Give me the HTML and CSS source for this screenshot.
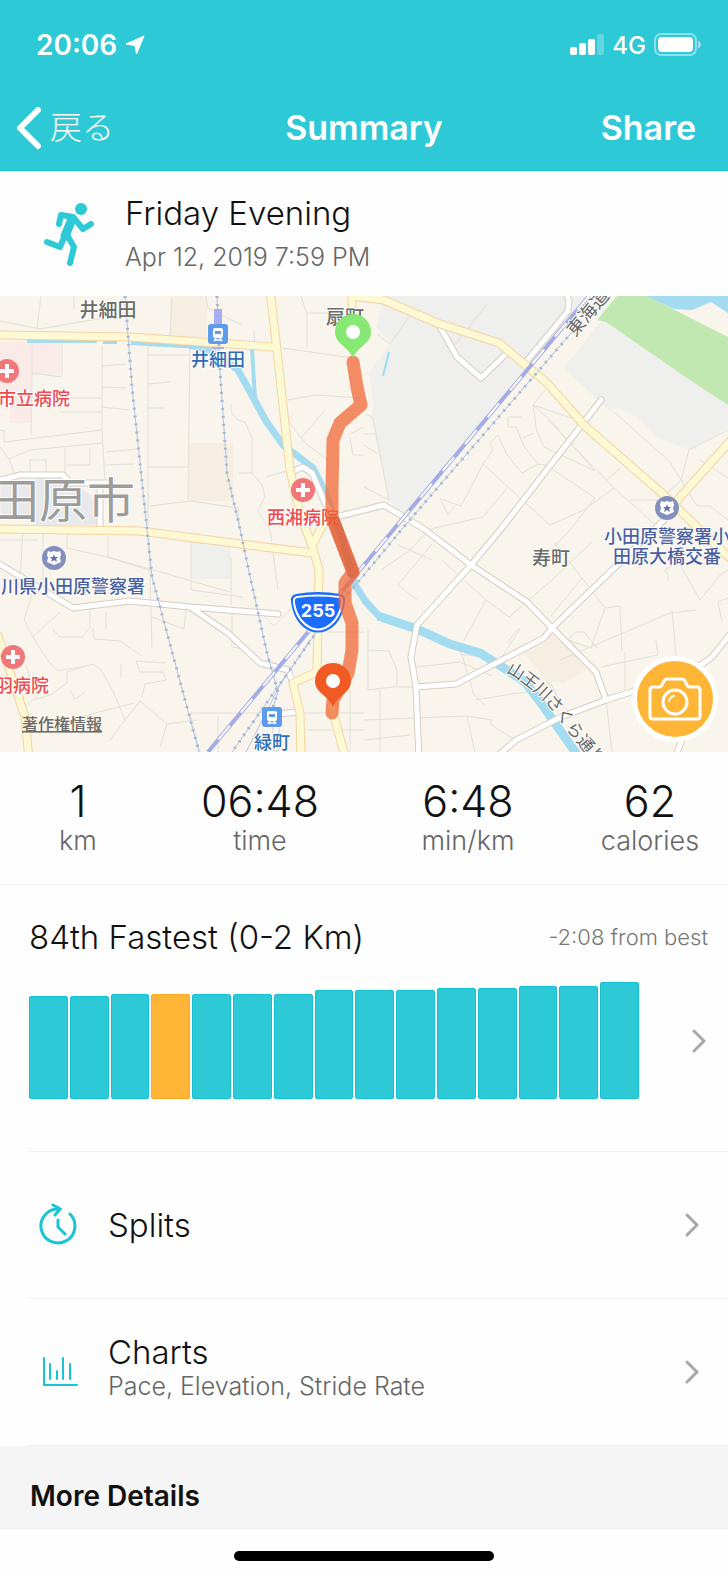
FILE: index.html
```
<!DOCTYPE html>
<html lang="ja">

<head>
    <meta charset="UTF-8">
    <meta name="viewport" content="width=device-width, initial-scale=1">
    <title>Summary</title>
    <link rel="stylesheet" href="styles.css">
</head>

<body>
    <header class="header">
        <div class="status-bar">
            <div class="status-time">
                <span>20:06</span>
                <svg width="20" height="20" viewBox="0 0 20 20"><path d="M19 1L1 9L10 10.500L11.500 19Z" fill="#fff" stroke="#fff" stroke-width="1" stroke-linejoin="round"/></svg>
            </div>
            <div class="status-icons">
                <svg width="34" height="22" viewBox="0 0 34 22" fill="#fff">
                    <rect x="0" y="13" width="7" height="8" rx="2"/>
                    <rect x="9" y="9" width="7" height="12" rx="2"/>
                    <rect x="18" y="5" width="7" height="16" rx="2"/>
                    <rect x="27" y="0" width="7" height="21" rx="2" opacity=".25"/>
                </svg>
                <span>4G</span>
                <svg width="48" height="24" viewBox="0 0 48 24">
                    <rect x="1" y="1" width="41" height="21" rx="6" fill="none" stroke="#fff" stroke-width="2" opacity=".45"/>
                    <rect x="4" y="4" width="35" height="15" rx="4" fill="#fff"/>
                    <path d="M44 7.500C48 9 48 14 44 15.500Z" fill="#fff" opacity=".5"/>
                </svg>
            </div>
        </div>
        <nav class="nav">
            <a href="#" class="nav-back">
                <svg width="26" height="42" viewBox="0 0 26 42"><path d="M22 3L4 21L22 39" fill="none" stroke="#fff" stroke-width="6" stroke-linecap="round" stroke-linejoin="round"/></svg>
                <span>戻る</span>
            </a>
            <h1 class="nav-title">Summary</h1>
            <button type="button" class="nav-share">Share</button>
        </nav>
    </header>

    <main>
        <section class="activity">
            <svg class="runner" width="52" height="66" viewBox="0 0 52 66" fill="none" stroke="#2dc9d7" stroke-width="6" stroke-linecap="round" stroke-linejoin="round">
                <circle cx="38" cy="7" r="6" fill="#2dc9d7" stroke="none"/>
                <path d="M16 22L18 13L30 15L40 27L48 22"/>
                <path d="M4 40L17 45L27 22"/>
                <path d="M24 33L31 45L27 61"/>
                <path d="M29 17L22 34" stroke-width="9"/>
            </svg>
            <div>
                <h2 class="activity-title">Friday Evening</h2>
                <p class="activity-date">Apr 12, 2019 7:59 PM</p>
            </div>
        </section>

        <section class="map">
            <svg class="map-canvas" viewBox="0 296 728 456">
                <defs>
                    <g id="hospital">
                        <circle r="12" fill="#f1787a"/>
                        <path d="M-7 0H7M0 -7V7" stroke="#fff" stroke-width="4"/>
                    </g>
                    <g id="police">
                        <circle r="12" fill="#8390bd"/>
                        <path d="M-6 -7L-3 -6L0 -7L3 -6L6 -7L7 -3L6 0L7 4L0 7L-7 4L-6 0L-7 -3Z" fill="#fff"/>
                        <path d="M0 -4L1 -1H4L2 1L3 4L0 2L-3 4L-2 1L-4 -1H-1Z" fill="#5f70aa"/>
                    </g>
                    <g id="train">
                        <rect x="-10" y="-10" width="20" height="20" rx="3" fill="#5d9cec"/>
                        <rect x="-5" y="-6" width="10" height="10" rx="2" fill="#fff"/>
                        <path d="M-3 -3H3V0H-3Z" fill="#5d9cec"/>
                        <path d="M-4 7L-2 4M4 7L2 4M-3 6H3" stroke="#fff" stroke-width="1.500"/>
                    </g>
                    <path id="pin" d="M0 26C-5 14 -18 12 -18 0A18 18 0 0 1 18 0C18 12 5 14 0 26Z"/>
                    <path id="river-street" d="M510 665Q547 686 570 720T627 778"/>

                    <g id="main-roads">
                        <path d="M0 335L130 337L273 347"/>
                        <path d="M270 290L277 350L290 470L300 515L312 545L319 570L317 672L293 683L300 713L301 760"/>
                        <path d="M0 529L140 531L233 543L312 553M323 525L312 545"/>
                        <path d="M352 290V330M352 296L384 300L437 323L499 343L547 383L586 427L664 495L697 527L732 560"/>
                        <path d="M732 439L664 515M331 705L346 760M-2 636L25 717L29 760"/>
                    </g>
                    <g id="side-roads">
                        <path d="M439 325L457 357L481 378L507 353"/>
                        <path d="M564 290L569 300L568 311L526 362"/>
                        <path d="M601 400L501 529L471 565L417 625L411 657L416 687L419 760"/>
                        <path d="M332 518L384 505L424 529L471 565L527 602L552 628L596 672L606 700"/>
                        <path d="M664 520L552 628L544 638L456 684L416 687"/>
                        <path d="M495 758L516 740L561 717L606 700L631 692L701 665L712 657L732 632"/>
                        <path d="M674 760L684 735"/>
                        <path d="M-4 562L73 608L130 601L190 607L278 614M190 607L228 633L260 663L288 670L293 683"/>
                        <path d="M-4 481L20 475H63L70 483H107M100 483V526"/>
                        <path d="M294 471L303 467L312 473L325 503L334 515"/>
                        <path d="M299 712L276 714V748"/>
                    </g>
                </defs>

                <rect y="296" width="728" height="456" fill="#f9f4ec"/>

                <!-- land use -->
                <path d="M384 296L376 327L390 343L369 373L374 405L371 417L389 500L404 517L520 374L577 310L585 296Z" fill="#efefed"/>
                <path d="M602 320L564 368L611 412L617 407L637 417L657 437L689 450L728 428V400Z" fill="#efefed"/>
                <path d="M617 296L597 320L606 322L687 378L728 405V337L647 296Z" fill="#c0e8b0"/>
                <path d="M646 296L674 309L692 310L711 302L728 313V296Z" fill="#a3dcf0"/>
                <path d="M0 342H61V375H31V423H10V395H0Z" fill="#fbebe8"/>
                <path d="M170 296H207V337H170ZM189 443H233V501H189ZM552 635L524 653L546 680L564 683L591 667Z" fill="#f5eee1"/>
                <path d="M191 541H231V579H191Z" fill="#efefed"/>
                <path d="M35 478H66L92 496L97 525H35ZM0 483H32V518H0Z" fill="#e9e9ec"/>

                <!-- alleys -->
                <g class="alley">
                    <path d="M0 321L40 329L137 312M41 296L37 328M74 296V309M170 337L172 298M206 296L208 308L241 325L242 322M254 330L255 349M301 296L307 314V348M307 313H328M283 348L353 358M288 400L315 395L361 398"/>
                    <path d="M32 342V373L62 377V343M32 373L31 435M31 398H102M60 412H102M102 345V430M102 430L4 442V431L0 430M0 447L9 459L30 450L102 443M9 459L14 473M30 472V460H46V472M65 448V474M65 465H90V448M102 430L105 483"/>
                    <path d="M148 345V525M190 345L188 500M148 355H190M102 366L127 364M102 387L127 388M102 407L130 410M105 452L137 449M105 465L134 464M148 384L170 382M148 408H165M148 467H188M191 501L150 506M191 501L238 508L240 529"/>
                    <path d="M231 404V412L238 420L245 422L252 438V473L239 473M252 473L262 485L265 496L258 512L270 530L278 590M266 477L290 470M301 438L325 410M289 422L305 443L336 466M350 437L353 455H364M364 427L348 435"/>
                    <path d="M0 540H37M23 529L20 580L32 595L24 620L33 637L48 661L58 671L86 666L93 664L101 670L113 691L125 720L140 701L167 724L160 747M43 580V529M67 535V548L107 557L149 570M108 536V557L230 592M149 540L152 648M191 542V590L243 597M231 558V605M33 637L60 612M53 630L60 637H82L90 628V609M93 628L94 639L120 641L142 656M106 612V630M152 617L184 629L186 609M232 613V647L250 650M260 612L274 626L290 610M327 632H364"/>
                    <path d="M26 665L30 678L50 695L67 683V672L86 666M50 695L32 700L20 712M70 690L75 699L85 692M121 664V677M136 661L140 672H163L166 680L145 684L142 697M136 661L165 663M80 717L134 703M125 720L110 740M190 713H364M190 713L200 752M167 724L197 720M218 716V752M350 690V752M306 730H364"/>
                    <path d="M409 317L390 344L378 335M455 345L488 303M366 414L373 418L389 500M364 434H375M364 445L378 454M364 487L389 500M545 390L533 405L537 432L544 447L595 471L550 420L533 405L583 422M522 417H508V427H516L524 446L538 464L522 473L507 455L498 435M523 438L534 433M538 464L546 465L595 498L570 530L549 552M498 435L490 443L493 450L483 464L461 506L440 499L448 515L455 506M483 464L508 487L483 517L430 529L409 551L381 570"/>
                    <path d="M508 487L550 525L584 510L614 488L548 420M607 480L621 467M614 488L660 529L700 600L720 575L728 570M614 412L670 462L681 480L697 506H710L728 520M681 480L660 500H630M681 480L689 450L728 430M700 460L728 478M398 545L432 560M432 544L398 585L417 600M442 560L486 600L464 640M486 600L509 617L552 580L592 542M551 616L582 578L605 608L591 648L568 640L575 632L584 632L597 648M582 578L554 542M605 608L620 606L622 650"/>
                    <path d="M368 630V690L392 687H413M368 650L389 651L397 670V687M416 667L460 662L492 676M462 654L464 662L474 695L485 705M464 643L460 654L500 660L520 629M507 643L519 628M475 700L537 690L550 682M546 680L570 715M550 682L562 705M560 660L670 613L696 610M656 640L658 655M672 610L676 656M364 720L467 716L492 720L490 724L515 740M467 716L475 752M380 752V690M364 740L410 735M606 700L612 752M625 652V690M658 655L601 667M668 582V575L665 570L690 555M728 598L718 602L722 622"/>
                </g>

                <!-- water -->
                <g class="water">
                    <path d="M27 341H97M103 342H117M131 343L200 347" stroke-width="4"/>
                    <path d="M190 345L212 351L238 370L266 421L283 445L313 468L325 492L340 530L355 585L366 602L380 617" stroke-width="7"/>
                    <path d="M252 349L255 398" stroke-width="4"/>
                    <path d="M389 352L383 376" stroke-width="2"/>
                    <path d="M378 616L417 629L450 644L480 653L507 670L525 682L541 703L578 756" stroke-width="9"/>
                </g>

                <!-- roads, casing first -->
                <use href="#side-roads" class="side-case"/>
                <use href="#side-roads" class="side-fill"/>
                <use href="#main-roads" class="main-case"/>
                <use href="#main-roads" class="main-fill"/>

                <!-- railways -->
                <g class="rail-thin">
                    <path d="M125 296L132 387L147 529L152 577L167 633L199 752"/>
                    <path d="M217 296L220 370L227 473L240 529L248 567L267 653L278 692L273 707"/>
                    <path d="M578 325L402 529L364 575L318 630L232 752"/>
                    <path d="M310 640L280 685L246 752"/>
                </g>
                <g class="rail-ties">
                    <path d="M125 296L132 387L147 529L152 577L167 633L199 752"/>
                    <path d="M217 296L220 370L227 473L240 529L248 567L267 653L278 692L273 707"/>
                    <path d="M578 325L402 529L364 575L318 630L232 752"/>
                </g>
                <path d="M589 296L394 529L208 752" fill="none" stroke="#a3ace6" stroke-width="4"/>
                <path d="M589 296L394 529L208 752" fill="none" stroke="#fff" stroke-width="2" stroke-dasharray="18 17"/>
                <path d="M214 309H222V324H214ZM212 347H224V349H212Z" fill="#a6aef2"/>

                <!-- labels -->
                <g class="label place">
                    <text x="108" y="317">井細田</text>
                    <text x="345" y="324">扇町</text>
                    <text x="551" y="565">寿町</text>
                </g>
                <text class="label city" x="63" y="518">田原市</text>
                <g class="label station">
                    <text x="218" y="366">井細田</text>
                    <text x="272" y="749">緑町</text>
                </g>
                <g class="label medical">
                    <text x="34" y="405">市立病院</text>
                    <text x="303" y="524">西湘病院</text>
                    <text x="22" y="692">羽病院</text>
                </g>
                <g class="label office">
                    <text x="73" y="593">川県小田原警察署</text>
                    <text x="667" y="543">小田原警察署小</text>
                    <text x="667" y="563">田原大橋交番</text>
                </g>
                <g class="label street">
                    <text x="588" y="319" transform="rotate(-50 588 313)">東海道</text>
                    <text class="street-along"><textPath href="#river-street">山王川さくら通り</textPath></text>
                </g>
                <use href="#hospital" x="7" y="371"/>
                <use href="#hospital" x="303" y="490"/>
                <use href="#hospital" x="13" y="657"/>
                <use href="#police" x="54" y="558"/>
                <use href="#police" x="667" y="508"/>
                <use href="#train" x="218" y="334"/>
                <use href="#train" x="272" y="717"/>

                <!-- route 255 -->
                <path d="M296 594Q318 590 340 594Q346 595 345 602Q342 624 326 631Q318 634 310 631Q294 624 291 602Q290 595 296 594Z" fill="#1a6dff"/>
                <path d="M297 597Q318 594 339 597Q343 598 342 603Q339 621 325 628Q318 631 311 628Q297 621 294 603Q293 598 297 597Z" fill="none" stroke="#fff" stroke-width="2"/>
                <text class="shield" x="318" y="617">255</text>

                <!-- track -->
                <path class="track" d="M353 362L357 387L361 405L340 423L333 440L332 490L332 517L353 572L345 583L345 603L352 623L352 650L348 673L333 700L332 713"/>
                <path class="track track-slow" d="M333 520L353 572"/>
                <use href="#pin" x="353" y="332" fill="#88e874"/>
                <circle cx="353" cy="332" r="7" fill="#fff"/>
                <use href="#pin" x="333" y="681" fill="#f15a22"/>
                <circle cx="333" cy="681" r="7" fill="#fff"/>

                <a href="#"><text class="legal" x="62" y="730">著作権情報</text></a>
            </svg>
            <button type="button" class="camera" aria-label="Add photo">
                <svg width="54" height="44" viewBox="0 0 54 44" fill="none" stroke="#fff" stroke-width="3" stroke-linejoin="round" stroke-linecap="round">
                    <path d="M5 10H11Q13 10 14 8L16 4Q17 2 19 2H34Q36 2 37 4L39 8Q40 10 42 10H49Q52 10 52 13V39Q52 42 49 42H5Q2 42 2 39V13Q2 10 5 10Z"/>
                    <circle cx="27" cy="25" r="12"/>
                    <path d="M21 24Q22 20 26 19" stroke-width="2"/>
                </svg>
            </button>
        </section>

        <dl class="stats">
            <div class="stat"><dd>1</dd><dt>km</dt></div>
            <div class="stat"><dd>06:48</dd><dt>time</dt></div>
            <div class="stat"><dd>6:48</dd><dt>min/km</dt></div>
            <div class="stat"><dd>62</dd><dt>calories</dt></div>
        </dl>

        <section class="ranking">
            <div class="ranking-head">
                <h2>84th Fastest (0-2 Km)</h2>
                <span>-2:08 from best</span>
            </div>
            <a href="#" class="ranking-body" aria-label="Ranking">
                <div class="bars">
                    <div class="bar" style="height: 103px"></div>
                    <div class="bar" style="height: 103px"></div>
                    <div class="bar" style="height: 105px"></div>
                    <div class="bar bar-current" style="height: 105px"></div>
                    <div class="bar" style="height: 105px"></div>
                    <div class="bar" style="height: 105px"></div>
                    <div class="bar" style="height: 105px"></div>
                    <div class="bar" style="height: 109px"></div>
                    <div class="bar" style="height: 109px"></div>
                    <div class="bar" style="height: 109px"></div>
                    <div class="bar" style="height: 111px"></div>
                    <div class="bar" style="height: 111px"></div>
                    <div class="bar" style="height: 113px"></div>
                    <div class="bar" style="height: 113px"></div>
                    <div class="bar" style="height: 117px"></div>
                </div>
                <svg class="chevron" width="14" height="24" viewBox="0 0 14 24"><path d="M2 2L12 12L2 22"/></svg>
            </a>
        </section>

        <a href="#" class="row">
            <svg class="row-icon" width="40" height="44" viewBox="0 0 40 44">
                <path d="M32 11A17 17 0 1 1 21 6"/>
                <path d="M15 2L22 6L17 12M20 17V24L27 31"/>
            </svg>
            <span class="row-text"><span class="row-title">Splits</span></span>
            <svg class="chevron" width="14" height="24" viewBox="0 0 14 24"><path d="M2 2L12 12L2 22"/></svg>
        </a>
        <a href="#" class="row">
            <svg class="row-icon row-icon-thin" width="40" height="44" viewBox="0 0 40 44">
                <path d="M6 8V35H39M12 14V29M19 21V29M25 8V29M32 14V29"/>
            </svg>
            <span class="row-text row-text-double">
                <span class="row-title">Charts</span>
                <span class="row-sub">Pace, Elevation, Stride Rate</span>
            </span>
            <svg class="chevron" width="14" height="24" viewBox="0 0 14 24"><path d="M2 2L12 12L2 22"/></svg>
        </a>

        <h2 class="more">More Details</h2>
    </main>

    <footer class="home">
        <div class="home-bar"></div>
    </footer>
</body>

</html>
```
FILE: styles.css
```
* {
    box-sizing: border-box;
}

body {
    margin: 0;
    background-color: #fefefe;
    color: #111;
    font-family: Inter, "Noto Sans CJK JP", sans-serif;
    font-weight: 300;
}

h1,
h2,
p,
dl,
dd {
    margin: 0;
    font-weight: inherit;
}

a {
    color: inherit;
    text-decoration: none;
}

svg {
    display: block;
    flex: none;
}

.header {
    background-color: #2dc9d7;
    border-bottom: 1px solid #12c2d3;
    color: #fff;
    padding-bottom: 4px;
}

.status-bar {
    height: 90px;
    padding: 0 26px 0 36px;
    display: flex;
    justify-content: space-between;
    align-items: center;
}

.status-time,
.status-icons {
    display: flex;
    align-items: center;
    gap: 8px;
}

.status-time {
    font-size: 28px;
    font-weight: 600;
}

.status-icons {
    font-size: 24px;
    font-weight: 500;
}

.nav {
    height: 76px;
    padding: 0 16px;
    display: grid;
    grid-template-columns: 1fr auto 1fr;
    align-items: center;
}

.nav-back {
    display: flex;
    align-items: center;
    gap: 8px;
    font-size: 32px;
    line-height: 40px;
}

.nav-title,
.nav-share {
    font-size: 34px;
    font-weight: 600;
    line-height: 40px;
}

.nav-share {
    justify-self: end;
    padding: 0 16px;
    border: none;
    background: none;
    color: inherit;
    font-family: inherit;
    cursor: pointer;
}

.activity {
    display: flex;
    align-items: center;
    gap: 30px;
    padding: 20px 43px 17px;
}

.activity-title {
    font-size: 33px;
    line-height: 44px;
}

.activity-date {
    color: #666;
    font-size: 25px;
    line-height: 44px;
}

.map {
    position: relative;
}

.map-canvas {
    width: 100%;
    height: auto;
}

.alley {
    fill: none;
    stroke: #e2e0d8;
    stroke-width: 1;
}

.water {
    fill: none;
    stroke: #a3dcf0;
    stroke-linejoin: round;
}

.side-case,
.side-fill,
.main-case,
.main-fill {
    fill: none;
    stroke-linejoin: round;
    stroke-linecap: round;
}

.side-case {
    stroke: #d6cdc4;
    stroke-width: 7;
}

.side-fill {
    stroke: #fff;
    stroke-width: 5;
}

.main-case {
    stroke: #f7d3a0;
    stroke-width: 9;
}

.main-fill {
    stroke: #fdf9d5;
    stroke-width: 7;
}

.rail-thin {
    fill: none;
    stroke: #b3c3dd;
    stroke-width: 1;
}

.rail-ties {
    fill: none;
    stroke: #a3b7d9;
    stroke-width: 3;
    stroke-dasharray: 2 6;
}

.label,
.legal,
.shield {
    text-anchor: middle;
    font-family: "Noto Sans CJK JP", sans-serif;
    font-weight: 500;
}

.label {
    font-size: 18px;
    paint-order: stroke;
    stroke: #fff;
    stroke-width: 2px;
    stroke-linejoin: round;
}

.place {
    fill: #6b6b68;
    font-size: 19px;
}

.city {
    fill: #9c9c9a;
    font-size: 48px;
    font-weight: 400;
}

.station {
    fill: #2f6cb5;
}

.medical {
    fill: #ee4b50;
}

.office {
    fill: #4a5fa3;
}

.street {
    fill: #666;
    font-weight: 400;
}

.street-along {
    text-anchor: start;
    dominant-baseline: central;
    font-size: 17px;
}

.shield {
    fill: #fff;
    font-family: Inter, sans-serif;
    font-size: 18px;
    font-weight: 700;
}

.legal {
    fill: #6a6a66;
    font-size: 16px;
    text-decoration: underline;
}

.track {
    fill: none;
    stroke: #f06a38;
    stroke-width: 13;
    stroke-linecap: round;
    stroke-linejoin: round;
    opacity: .75;
}

.track-slow {
    stroke: #d9502a;
    opacity: .45;
}

.camera {
    position: absolute;
    right: 10px;
    bottom: 10px;
    width: 86px;
    height: 86px;
    display: flex;
    justify-content: center;
    align-items: center;
    padding: 0;
    border: 5px solid #fff;
    border-radius: 50%;
    background-color: #ffb536;
    cursor: pointer;
}

.stats {
    display: grid;
    grid-template-columns: 3fr 4fr 4fr 3fr;
    padding: 27px 0 25px;
    border-bottom: 1px solid #f0f0f0;
    text-align: center;
}

.stat {
    display: flex;
    flex-direction: column;
}

.stat dd {
    font-size: 43px;
    line-height: 44px;
}

.stat dt {
    color: #666;
    font-size: 27px;
    line-height: 36px;
}

.ranking {
    margin-left: 29px;
    padding: 30px 20px 52px 0;
    border-bottom: 1px solid #f0f0f0;
}

.ranking-head {
    display: flex;
    justify-content: space-between;
    align-items: center;
    margin-bottom: 23px;
}

.ranking-head h2 {
    font-size: 33px;
    line-height: 44px;
}

.ranking-head span {
    color: #777;
    font-size: 22px;
}

.ranking-body {
    display: flex;
    align-items: center;
    gap: 53px;
    padding-right: 2px;
}

.bars {
    flex: 1;
    display: flex;
    align-items: flex-end;
    gap: 2px;
}

.bar {
    flex: 1;
    border: 1px solid #12c2d3;
    border-radius: 2px;
    background-color: #2dc9d7;
}

.bar-current {
    border-color: #ffa91c;
    background-color: #ffb536;
}

.chevron {
    fill: none;
    stroke: #a8a8a8;
    stroke-width: 3;
    stroke-linecap: round;
    stroke-linejoin: round;
}

.row {
    display: flex;
    align-items: center;
    gap: 30px;
    min-height: 147px;
    margin-left: 29px;
    padding: 0 29px 0 9px;
    border-bottom: 1px solid #f0f0f0;
}

.row-icon {
    fill: none;
    stroke: #17c5d5;
    stroke-width: 3;
    stroke-linecap: round;
}

.row-icon-thin {
    stroke-width: 2;
}

.row-text {
    flex: 1;
    display: flex;
    flex-direction: column;
}

.row-text-double {
    padding-bottom: 10px;
}

.row-title {
    font-size: 33px;
    line-height: 38px;
}

.row-sub {
    color: #666;
    font-size: 25px;
    line-height: 30px;
}

.more {
    padding: 32px 30px 14px;
    border-bottom: 1px solid #ececec;
    background-color: #f5f5f5;
    font-size: 28px;
    font-weight: 600;
    line-height: 36px;
}

.home {
    height: 48px;
    padding-top: 22px;
}

.home-bar {
    width: 260px;
    height: 10px;
    margin: 0 auto;
    border-radius: 5px;
    background-color: #000;
}
```
